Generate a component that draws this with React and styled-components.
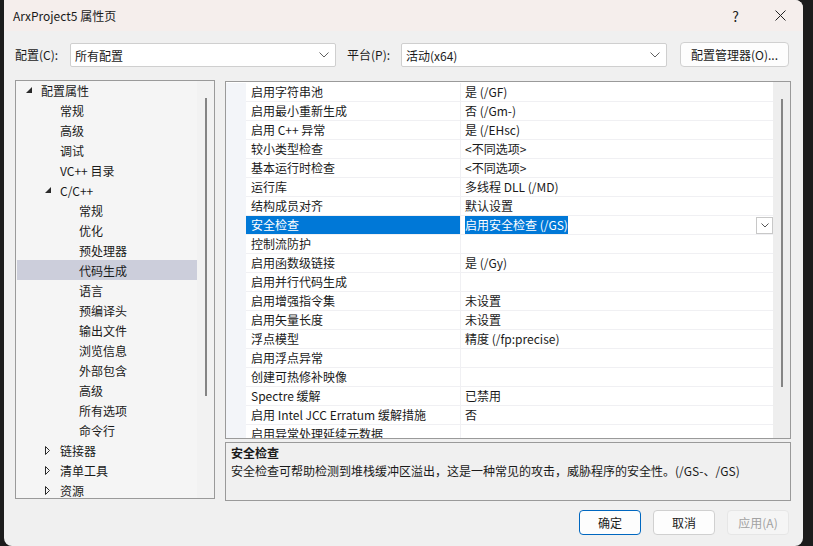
import React from "react";
import styled, {createGlobalStyle} from "styled-components";

const Global = createGlobalStyle`
  body {
    margin: 0;
    background: #1c1c1c;
    overflow: hidden;
    font-family: "Segoe UI", "Noto Sans CJK SC", sans-serif;
    font-size: 12px;
    color: #1a1a1a;
  }
`

const Page = styled.div`
  display: flex;
  width: 813px;
  height: 546px;
  padding-left: 4px;
  box-sizing: border-box;
`

const Window = styled.div`
  display: flex;
  flex-direction: column;
  width: 799px;
  height: 546px;
  background: #f0f0f0;
  border-radius: 0 8px 8px 8px;
  overflow: hidden;
`

const TitleBar = styled.div`
  display: flex;
  align-items: center;
  height: 31px;
  padding-left: 9px;
  background: #f5eeec;
`

const Title = styled.div`
  flex: 1;
  line-height: 31px;
`

const TitleBtn = styled.div`
  display: flex;
  align-items: center;
  justify-content: center;
  width: 45px;
  height: 31px;
  font-size: 14px;
  color: #222;
`

const Toolbar = styled.div`
  display: flex;
  align-items: center;
  height: 25px;
  margin-top: 11px;
  padding-left: 11px;
`

const Label = styled.div`
  width: ${p => p.width}px;
  line-height: 25px;
`

const Combo = styled.div`
  display: flex;
  align-items: center;
  width: ${p => p.width}px;
  height: 24px;
  margin-top: 1px;
  margin-right: 11px;
  padding: 0 6px 0 4px;
  box-sizing: border-box;
  background: #fff;
  border: 1px solid #cfcfcf;
  border-radius: 2px;
`

const ComboText = styled.div`
  flex: 1;
`

const Button = styled.div`
  display: flex;
  align-items: center;
  justify-content: center;
  width: ${p => p.width || 62}px;
  height: 25px;
  margin-left: ${p => p.offset || 0}px;
  box-sizing: border-box;
  border-radius: 4px;
  background: ${p => p.disabled ? '#f5f5f5' : '#fdfdfd'};
  color: ${p => p.disabled ? '#a2a2a2' : '#1a1a1a'};
  border: 1px solid ${p => p.primary ? '#0067c0' : p.disabled ? '#e6e6e6' : '#d0d0d0'};
`

const Main = styled.div`
  display: flex;
  gap: 10px;
  margin-top: 13px;
  padding-left: 11px;
`

const TreePanel = styled.div`
  display: flex;
  width: 200px;
  height: 419px;
  box-sizing: border-box;
  border: 1px solid #9a9a9a;
  background: #f5f5f5;
`

const TreeList = styled.div`
  flex: 1;
  margin-top: -1px;
  padding-left: 1px;
  overflow: hidden;
`

const TreeRow = styled.div`
  display: flex;
  align-items: center;
  height: 20px;
  padding-left: ${p => 5 + p.level * 19}px;
  background: ${p => p.selected ? '#cccedb' : 'transparent'};
  white-space: nowrap;
`

const Expander = styled.div`
  display: flex;
  align-items: center;
  width: 19px;
  height: 20px;
  padding-left: 4px;
  box-sizing: border-box;
`

const ScrollTrack = styled.div`
  display: flex;
  justify-content: center;
  width: 17px;
  padding-top: ${p => p.top}px;
  box-sizing: border-box;
  background: ${p => p.bg};
`

const ScrollThumb = styled.div`
  width: 2px;
  height: ${p => p.size}px;
  background: #858585;
`

const RightColumn = styled.div`
  display: flex;
  flex-direction: column;
  gap: 3px;
  margin-top: 1px;
`

const GridPanel = styled.div`
  display: flex;
  width: 566px;
  height: 358px;
  box-sizing: border-box;
  border: 1px solid #9a9a9a;
  background: #fff;
`

const GridBody = styled.div`
  flex: 1;
  padding-top: 1px;
  overflow: hidden;
`

const GridRow = styled.div`
  display: flex;
  height: 19px;
`

const Gutter = styled.div`
  width: 20px;
  background: #f3f5f9;
`

const NameCell = styled.div`
  width: 215px;
  padding-left: 5px;
  box-sizing: border-box;
  line-height: 18px;
  border-bottom: 1px solid #f0f0f3;
  border-right: 1px solid #f0f0f3;
  background: ${p => p.selected ? '#0078d7' : '#fff'};
  color: ${p => p.selected ? '#fff' : '#1a1a1a'};
  white-space: nowrap;
  overflow: hidden;
`

const ValueCell = styled.div`
  display: flex;
  align-items: center;
  flex: 1;
  padding-left: 4px;
  line-height: 18px;
  border-bottom: 1px solid #f0f0f3;
  white-space: nowrap;
`

const ValueText = styled.span`
  flex: ${p => p.selected ? '0 0 auto' : '1'};
  background: ${p => p.selected ? '#0078d7' : 'transparent'};
  color: ${p => p.selected ? '#fff' : '#1a1a1a'};
`

const DropButton = styled.div`
  display: flex;
  align-items: center;
  justify-content: center;
  margin-left: auto;
  width: 17px;
  height: 17px;
  box-sizing: border-box;
  border: 1px solid #c8c8c8;
  background: #fff;
`

const DescPanel = styled.div`
  width: 566px;
  height: 59px;
  padding: 1px 5px;
  box-sizing: border-box;
  border: 1px solid #9a9a9a;
  line-height: 18px;
`

const DescTitle = styled.div`
  font-weight: bold;
`

const Footer = styled.div`
  display: flex;
  justify-content: flex-end;
  gap: 12px;
  margin-top: 9px;
  padding-right: 14px;
`

const Chevron = () => (
  <svg width="10" height="6" viewBox="0 0 10 6">
    <polyline points="0.5,0.5 5,5 9.5,0.5" fill="none" stroke="#606060" strokeWidth="1"/>
  </svg>
)

const Open = () => (
  <svg width="6" height="6" viewBox="0 0 6 6">
    <polygon points="6,0 6,6 0,6" fill="#2a2a2a"/>
  </svg>
)

const Closed = () => (
  <svg width="5" height="9" viewBox="0 0 5 9">
    <polygon points="0.5,0.5 4.5,4.5 0.5,8.5" fill="none" stroke="#2a2a2a" strokeWidth="1"/>
  </svg>
)

const tree = [
  {text: '配置属性', level: 0, exp: 'open'},
  {text: '常规', level: 1},
  {text: '高级', level: 1},
  {text: '调试', level: 1},
  {text: 'VC++ 目录', level: 1},
  {text: 'C/C++', level: 1, exp: 'open'},
  {text: '常规', level: 2},
  {text: '优化', level: 2},
  {text: '预处理器', level: 2},
  {text: '代码生成', level: 2, selected: true},
  {text: '语言', level: 2},
  {text: '预编译头', level: 2},
  {text: '输出文件', level: 2},
  {text: '浏览信息', level: 2},
  {text: '外部包含', level: 2},
  {text: '高级', level: 2},
  {text: '所有选项', level: 2},
  {text: '命令行', level: 2},
  {text: '链接器', level: 1, exp: 'closed'},
  {text: '清单工具', level: 1, exp: 'closed'},
  {text: '资源', level: 1, exp: 'closed'},
]

const props = [
  ['启用字符串池', '是 (/GF)'],
  ['启用最小重新生成', '否 (/Gm-)'],
  ['启用 C++ 异常', '是 (/EHsc)'],
  ['较小类型检查', '<不同选项>'],
  ['基本运行时检查', '<不同选项>'],
  ['运行库', '多线程 DLL (/MD)'],
  ['结构成员对齐', '默认设置'],
  ['安全检查', '启用安全检查 (/GS)'],
  ['控制流防护', ''],
  ['启用函数级链接', '是 (/Gy)'],
  ['启用并行代码生成', ''],
  ['启用增强指令集', '未设置'],
  ['启用矢量长度', '未设置'],
  ['浮点模型', '精度 (/fp:precise)'],
  ['启用浮点异常', ''],
  ['创建可热修补映像', ''],
  ['Spectre 缓解', '已禁用'],
  ['启用 Intel JCC Erratum 缓解措施', '否'],
  ['启用异常处理延续元数据', ''],
]

const App = () => {
  return (
    <Page>
      <Global/>
      <Window>
        <TitleBar>
          <Title>ArxProject5 属性页</Title>
          <TitleBtn>?</TitleBtn>
          <TitleBtn>
            <svg width="11" height="11" viewBox="0 0 11 11">
              <path d="M0.5 0.5 L10.5 10.5 M10.5 0.5 L0.5 10.5" stroke="#222" strokeWidth="1"/>
            </svg>
          </TitleBtn>
        </TitleBar>

        <Toolbar>
          <Label width={55}>配置(C):</Label>
          <Combo width={266}>
            <ComboText>所有配置</ComboText>
            <Chevron/>
          </Combo>
          <Label width={54}>平台(P):</Label>
          <Combo width={266}>
            <ComboText>活动(x64)</ComboText>
            <Chevron/>
          </Combo>
          <Button width={109} offset={2}>配置管理器(O)...</Button>
        </Toolbar>

        <Main>
          <TreePanel>
            <TreeList>
              {tree.map((t, i) => (
                <TreeRow key={i} level={t.level} selected={t.selected}>
                  <Expander>
                    {t.exp === 'open' && <Open/>}
                    {t.exp === 'closed' && <Closed/>}
                  </Expander>
                  {t.text}
                </TreeRow>
              ))}
            </TreeList>
            <ScrollTrack top={17} bg="#f2f2f2">
              <ScrollThumb size={298}/>
            </ScrollTrack>
          </TreePanel>

          <RightColumn>
            <GridPanel>
              <GridBody>
                {props.map(([name, value], i) => {
                  const sel = i === 7
                  return (
                    <GridRow key={i}>
                      <Gutter/>
                      <NameCell selected={sel}>{name}</NameCell>
                      <ValueCell>
                        <ValueText selected={sel}>{value}</ValueText>
                        {sel && (
                          <DropButton>
                            <svg width="8" height="5" viewBox="0 0 8 5">
                              <polyline points="0.5,0.5 4,4 7.5,0.5" fill="none" stroke="#555" strokeWidth="1"/>
                            </svg>
                          </DropButton>
                        )}
                      </ValueCell>
                    </GridRow>
                  )
                })}
              </GridBody>
              <ScrollTrack top={17} bg="#eeeeee">
                <ScrollThumb size={288}/>
              </ScrollTrack>
            </GridPanel>
            <DescPanel>
              <DescTitle>安全检查</DescTitle>
              <div>安全检查可帮助检测到堆栈缓冲区溢出，这是一种常见的攻击，威胁程序的安全性。(/GS-、/GS)</div>
            </DescPanel>
          </RightColumn>
        </Main>

        <Footer>
          <Button primary>确定</Button>
          <Button>取消</Button>
          <Button disabled>应用(A)</Button>
        </Footer>
      </Window>
    </Page>
  )
}

export default App;
